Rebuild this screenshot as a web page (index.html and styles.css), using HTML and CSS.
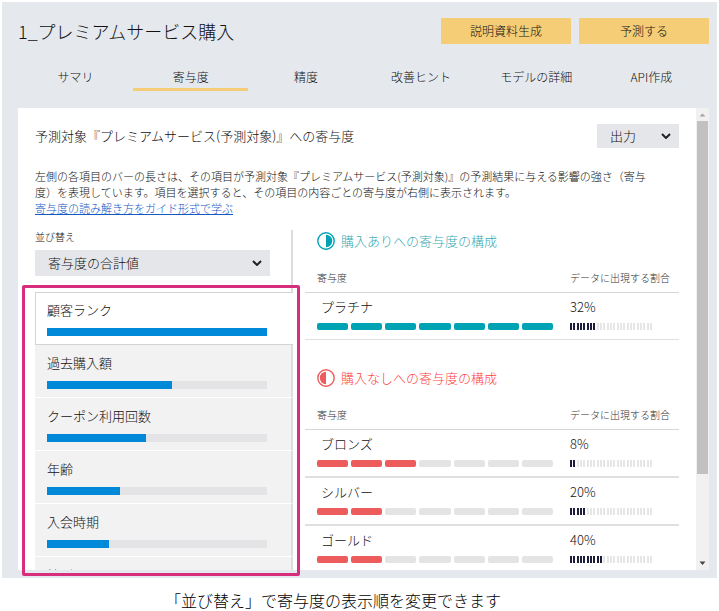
FILE: index.html
```html
<!DOCTYPE html>
<html lang="ja">
<head>
<meta charset="utf-8">
<meta name="viewport" content="width=device-width, initial-scale=1">
<title>1_プレミアムサービス購入</title>
<link rel="stylesheet" href="styles.css">
</head>
<body>
<main class="app">
  <header class="header">
    <h1 class="title">1_プレミアムサービス購入</h1>
    <div class="actions">
      <button class="action" type="button">説明資料生成</button>
      <button class="action" type="button">予測する</button>
    </div>
  </header>
  <nav class="tabs">
    <a class="tab" href="#">サマリ</a>
    <a class="tab tab-active" href="#" aria-current="page">寄与度</a>
    <a class="tab" href="#">精度</a>
    <a class="tab" href="#">改善ヒント</a>
    <a class="tab" href="#">モデルの詳細</a>
    <a class="tab" href="#">API作成</a>
  </nav>
  <div class="panel">
    <div class="content">
      <div class="content-head">
        <h2 class="heading">予測対象『プレミアムサービス(予測対象)』への寄与度</h2>
        <div class="select select-output">
          <select aria-label="出力"><option>出力</option></select>
          <svg class="chevron" viewBox="0 0 10 6" aria-hidden="true"><path d="M1 1l4 4 4-4"/></svg>
        </div>
      </div>
      <p class="intro">左側の各項目のバーの長さは、その項目が予測対象『プレミアムサービス(予測対象)』の予測結果に与える影響の強さ（寄与度）を表現しています。項目を選択すると、その項目の内容ごとの寄与度が右側に表示されます。<br><a href="#">寄与度の読み解き方をガイド形式で学ぶ</a></p>
      <div class="columns">
        <section class="left">
          <div class="sort">
            <label class="small-label" for="sort">並び替え</label>
            <div class="select select-sort">
              <select id="sort"><option>寄与度の合計値</option></select>
              <svg class="chevron" viewBox="0 0 10 6" aria-hidden="true"><path d="M1 1l4 4 4-4"/></svg>
            </div>
          </div>
          <div class="ranking">
            <ul class="items">
              <li><button class="item item-selected" type="button"><span>顧客ランク</span><span class="bar"><span class="fill" style="width:100%"></span></span></button></li>
              <li><button class="item" type="button"><span>過去購入額</span><span class="bar"><span class="fill" style="width:57%"></span></span></button></li>
              <li><button class="item" type="button"><span>クーポン利用回数</span><span class="bar"><span class="fill" style="width:45%"></span></span></button></li>
              <li><button class="item" type="button"><span>年齢</span><span class="bar"><span class="fill" style="width:33%"></span></span></button></li>
              <li><button class="item" type="button"><span>入会時期</span><span class="bar"><span class="fill" style="width:28%"></span></span></button></li>
              <li><button class="item" type="button"><span>性別</span><span class="bar"><span class="fill" style="width:20%"></span></span></button></li>
            </ul>
          </div>
        </section>
        <div class="right">
          <section class="group group-yes">
            <h3 class="group-title"><svg viewBox="0 0 18 18" aria-hidden="true"><circle cx="9" cy="9" r="8.2"/><path d="M9 2.8a6.2 6.2 0 0 1 0 12.4z"/></svg>購入ありへの寄与度の構成</h3>
            <table class="table">
              <thead><tr><th>寄与度</th><th class="share">データに出現する割合</th></tr></thead>
              <tbody>
                <tr data-level="7" data-share="8"><td><span class="name">プラチナ</span></td><td>32%</td></tr>
              </tbody>
            </table>
          </section>
          <section class="group group-no">
            <h3 class="group-title"><svg viewBox="0 0 18 18" aria-hidden="true"><circle cx="9" cy="9" r="8.2"/><path d="M9 2.8a6.2 6.2 0 0 0 0 12.4z"/></svg>購入なしへの寄与度の構成</h3>
            <table class="table">
              <thead><tr><th>寄与度</th><th class="share">データに出現する割合</th></tr></thead>
              <tbody>
                <tr data-level="3" data-share="2"><td><span class="name">ブロンズ</span></td><td>8%</td></tr>
                <tr data-level="2" data-share="5"><td><span class="name">シルバー</span></td><td>20%</td></tr>
                <tr data-level="2" data-share="10"><td><span class="name">ゴールド</span></td><td>40%</td></tr>
              </tbody>
            </table>
          </section>
        </div>
      </div>
    </div>
    <div class="scrollbar" aria-hidden="true">
      <svg class="arrow arrow-up" viewBox="0 0 13 13"><path d="M3.5 8.5l3-3 3 3z"/></svg>
      <div class="track"><div class="thumb"></div></div>
      <svg class="arrow arrow-down" viewBox="0 0 13 13"><path d="M3.5 4.5h6l-3 3.5z"/></svg>
    </div>
  </div>
</main>
<p class="caption">「並び替え」で寄与度の表示順を変更できます</p>
<script src="script.js"></script>
</body>
</html>
```
FILE: script.js
```js
// Builds the segmented meters from each row's level (of 7) and share (of 25).
function meter(className, total, on) {
  const el = document.createElement('span');
  el.className = className;
  for (let i = 0; i < total; i++) {
    const part = document.createElement('i');
    if (i < on) part.className = 'on';
    el.append(part);
  }
  return el;
}

document.querySelectorAll('tr[data-level]').forEach((row) => {
  row.cells[0].append(meter('segments', 7, Number(row.dataset.level)));
  row.cells[1].append(meter('ticks', 25, Number(row.dataset.share)));
});
```
FILE: styles.css
```css
* { box-sizing: border-box; }

body {
  margin: 0;
  background: #fff;
  color: #111;
  font: 300 13px/20px "Noto Sans CJK JP", "Noto Sans", sans-serif;
}

h1, h2, h3, p, ul { margin: 0; padding: 0; font-weight: inherit; }
ul { list-style: none; }
button, select { font: inherit; color: inherit; }

.app {
  margin: 2px 2px 0;
  padding: 16px 8px 8px 16px;
  background: #e5e9ee;
}

.header { display: flex; align-items: center; justify-content: space-between; height: 26px; }
.title { font-size: 18px; line-height: 26px; }
.actions { display: flex; gap: 8px; }
.action {
  width: 130px;
  height: 26px;
  padding: 0;
  border: 0;
  border-radius: 1px;
  background: #f4cd76;
  font-size: 12px;
}

.tabs { display: grid; grid-template-columns: repeat(6, 1fr); margin-top: 22px; }
.tab {
  border-bottom: 3px solid transparent;
  color: inherit;
  font-size: 12px;
  line-height: 22px;
  text-align: center;
  text-decoration: none;
}
.tab-active { border-color: #f4cd76; }

.panel { display: flex; margin-top: 17px; background: #fff; }
.content { flex: 1; min-width: 0; padding: 16px 17px 0; }
.content-head { display: flex; align-items: center; justify-content: space-between; }
.heading { font-size: 13px; }

.select { position: relative; }
.select select {
  display: block;
  width: 100%;
  height: 100%;
  padding: 0 28px 0 13px;
  border: 0;
  border-radius: 0;
  background: #e4e6ea;
  appearance: none;
}
.select-output { width: 82px; height: 24px; }
.select-sort { width: 235px; max-width: 100%; height: 26px; }
.chevron {
  position: absolute;
  top: calc(50% - 3px);
  right: 8px;
  width: 10px;
  height: 6px;
  fill: none;
  stroke: #222;
  stroke-width: 2;
  pointer-events: none;
}

.intro { max-width: 636px; margin-top: 20px; padding-right: 20px; font-size: 11px; line-height: 16px; }
.intro a { color: #1459c4; }

.columns { display: grid; grid-template-columns: 258fr 374fr; gap: 12px; margin-top: 14px; }
.left { display: flex; flex-direction: column; min-width: 0; }
.sort { padding-bottom: 16px; border-right: 2px solid #dcdddf; }
.small-label { display: block; margin-bottom: 6px; font-size: 10px; line-height: 14px; }

.ranking { position: relative; flex: 1 1 0; min-height: 0; }
.ranking::after {
  content: "";
  position: absolute;
  inset: -7px -7px -6px -13px;
  border: 3px solid #d62e7c;
  border-radius: 2px;
  pointer-events: none;
}
.items { height: 100%; overflow: hidden; }
.item {
  display: flex;
  flex-direction: column;
  justify-content: flex-start;
  width: 100%;
  height: 53px;
  padding: 8px 24px 0 12px;
  border: 0;
  border-right: 2px solid #dcdddf;
  border-bottom: 1px solid #fff;
  background: #f2f2f2;
  text-align: left;
}
.item-selected {
  border: 1px solid #d2d3d5;
  border-width: 1px 0 1px 1px;
  padding-top: 7px;
  padding-right: 26px;
  padding-left: 11px;
  background: #fff;
}
.bar { width: 100%; height: 8px; margin-top: 8px; background: #e4e4e6; }
.fill { display: block; height: 100%; background: #0089d8; }

.group-no { margin-top: 27px; }
.group-title {
  display: flex;
  align-items: center;
  gap: 6px;
  height: 21px;
  margin-bottom: 20px;
  padding-left: 12px;
  font-size: 13px;
}
.group-title svg { width: 18px; height: 18px; }
.group-title circle { fill: none; stroke-width: 1.4; }
.group-yes .group-title { color: #35a8b2; }
.group-no .group-title { color: #ff4040; }
.group-yes svg { fill: #00a3b4; stroke: #00a3b4; }
.group-no svg { fill: #ed5c5c; stroke: #ed5c5c; }
.group-title path { stroke: none; }

.table { width: 100%; border-collapse: separate; border-spacing: 0; table-layout: fixed; }
.table th {
  padding: 0 0 7px 12px;
  border-bottom: 1px solid #d5d6d8;
  color: #333;
  font-size: 10px;
  font-weight: inherit;
  line-height: 14px;
  text-align: left;
}
.table .share { width: 109px; padding-left: 0; }
.table td { padding: 4px 17px 9px 12px; border-bottom: 2px solid #dfe0e2; }
.table td + td { padding: 4px 0 9px; }
.group-yes .table td { border-bottom-width: 1px; }
.group-no .table tr:last-child td { padding-bottom: 7px; border-bottom: 0; }
.name { display: block; padding-left: 4px; }

.segments { display: grid; grid-template-columns: repeat(7, 1fr); gap: 3px; margin-top: 6px; }
.segments i { height: 7px; border-radius: 2px; background: #e4e4e4; }
.group-yes .on { background: #00a3b4; }
.group-no .segments .on { background: #ed5c5c; }

.ticks { display: flex; justify-content: space-between; width: 82px; margin-top: 6px; }
.ticks i { width: 2px; height: 7px; background: #e6e6e6; }
.group .ticks .on { background: #1b1d3a; }

.scrollbar { display: flex; flex-direction: column; width: 13px; background: #f1f1f1; }
.arrow { display: block; width: 13px; height: 13px; }
.arrow-up { fill: #a3a3a3; }
.arrow-down { fill: #444; }
.track { flex: 1; padding: 0 1px; }
.thumb { height: 81%; background: #c1c1c1; }

.caption { padding: 12px 53px 0 0; color: #000; font-size: 16px; line-height: 20px; text-align: center; }
```
